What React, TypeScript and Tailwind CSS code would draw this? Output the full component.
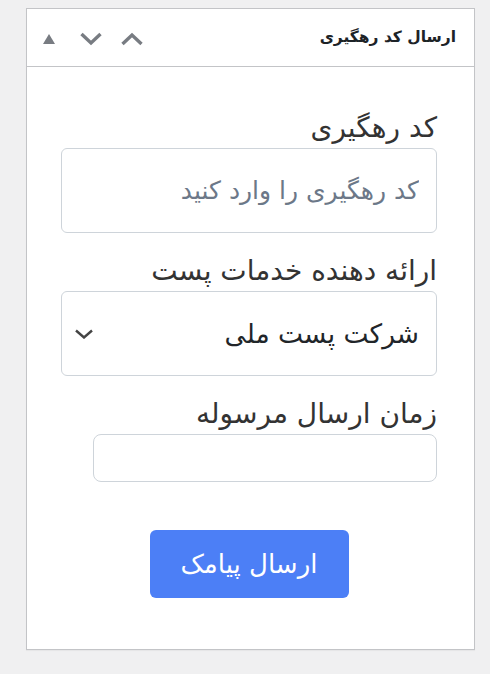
function Field({ label, children }: { label: string; children: React.ReactNode }) {
  return (
    <div className="flex flex-col items-stretch">
      <label className="text-[28px] leading-[40px] text-[#333] text-right">{label}</label>
      {children}
    </div>
  );
}

function Chevron({ up, className }: { up?: boolean; className?: string }) {
  return (
    <svg width="22" height="14" viewBox="0 0 22 14" className={className}>
      <polyline
        points={up ? '1.5,12 11,3 20.5,12' : '1.5,2 11,11 20.5,2'}
        fill="none"
        stroke="currentColor"
        strokeWidth="3.4"
      />
    </svg>
  );
}

export default function App() {
  return (
    <div className="min-h-[674px] bg-[#f0f0f1] pt-2 pl-[26px] font-['DejaVu_Sans',sans-serif]">
      <div className="w-[449px] h-[642px] bg-white border border-[#c3c4c7] shadow-[0_1px_1px_rgba(0,0,0,0.04)]">
        <div className="h-[58px] flex items-center justify-between border-b border-[#c3c4c7] pl-[15px] pr-[18px]">
          <div className="flex items-center text-[#787c82] pt-[2px]">
            <svg width="14" height="12" viewBox="0 0 14 12">
              <path d="M7 1 L13 11 L1 11 Z" fill="#787c82" />
            </svg>
            <Chevron className="ml-[24px]" />
            <Chevron up className="ml-[19px]" />
          </div>
          <h2 dir="rtl" className="text-[15.5px] font-bold text-[#1d2327]">ارسال کد رهگیری</h2>
        </div>

        <div dir="rtl" className="pt-[41px] pr-[37px] pl-[34px] flex flex-col gap-[18px]">
          <Field label="کد رهگیری">
            <input
              placeholder="کد رهگیری را وارد کنید"
              className="h-[85px] rounded-[6px] border border-[#ced4da] px-[17px] text-[25px] text-[#212529] placeholder:text-[#6c7888] outline-none"
            />
          </Field>

          <Field label="ارائه دهنده خدمات پست">
            <div className="h-[85px] rounded-[6px] border border-[#ced4da] flex items-center justify-between pr-[17px] pl-[12px]">
              <span className="text-[26.5px] text-[#212529]">شرکت پست ملی</span>
              <svg width="20" height="10" viewBox="0 0 20 10" className="text-[#444]">
                <polyline points="2,1.5 10,8.5 18,1.5" fill="none" stroke="currentColor" strokeWidth="2.4" />
              </svg>
            </div>
          </Field>

          <Field label="زمان ارسال مرسوله">
            <input
              type="text"
              className="w-[344px] h-[48px] rounded-[8px] border border-[#ced4da] outline-none"
            />
          </Field>

          <div className="flex justify-center pt-[30px]">
            <button className="w-[199px] h-[68px] rounded-[6px] bg-[#4c7ff6] text-white text-[26px]">
              ارسال پیامک
            </button>
          </div>
        </div>
      </div>
    </div>
  );
}
